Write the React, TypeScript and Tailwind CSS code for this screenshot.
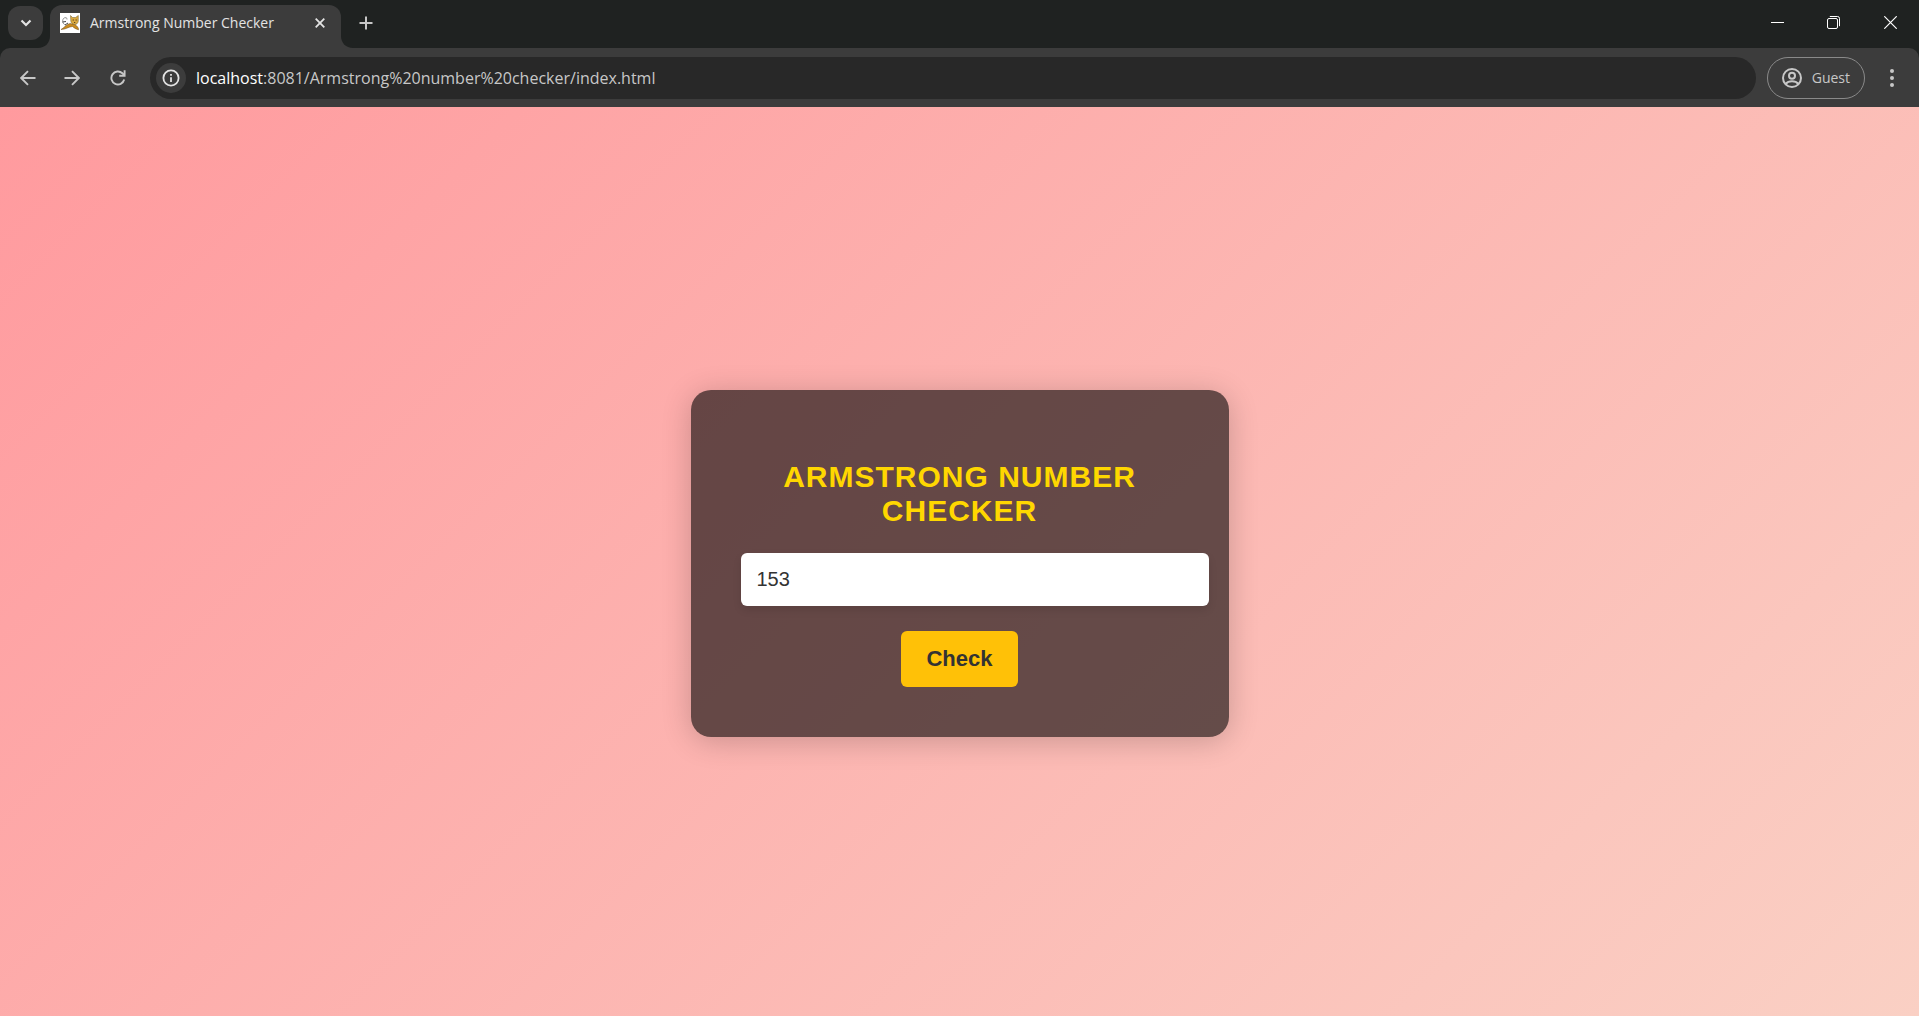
import { useState } from "react";
import type { ReactNode } from "react";

function IconButton({ label, className, children }: { label: string; className: string; children: ReactNode }) {
  return (
    <button type="button" aria-label={label} className={`flex shrink-0 items-center justify-center ${className}`}>
      {children}
    </button>
  );
}

function CatFavicon() {
  return (
    <svg viewBox="0 0 20 20" className="h-5 w-5 shrink-0" aria-hidden="true">
      <rect width="20" height="20" fill="#ffffff" />
      <path d="M5.500 12C2.500 11 2 7.500 3.500 5.500C5 4 7.500 4.500 7 6.500" fill="none" stroke="#777" strokeWidth=".8" />
      <path d="M2.500 9L6 8.500M5 12L8 10" stroke="#444" strokeWidth="1" />
      <path d="M1 16.500C4 15 6 11.500 10 10.500L15 11.500C17 13 19 15 18.500 16.800C16 16 14 15 12.500 13.500C9 13.500 6 16.500 1 16.500Z" fill="#c98a1e" stroke="#6b4a16" strokeWidth=".5" />
      <path d="M10.500 2.500L12.500 4.500H15.500L18.300 2.500L18.300 8C18 10.500 16.500 11.500 14.800 11.500C12.500 11.500 11 10 10.800 8Z" fill="#dba93f" stroke="#6b5a2a" strokeWidth=".5" />
      <path d="M12.700 7h1.100M15.600 7h1.100M14.200 9.500h1" stroke="#3c3020" strokeWidth="1" />
    </svg>
  );
}

function TabStrip() {
  return (
    <div className="flex h-12 items-stretch bg-[#1f2221]">
      <IconButton label="Search tabs" className="mt-1.5 ml-2 h-[34px] w-[35px] rounded-xl bg-[#3c3c3c]">
        <svg viewBox="0 0 12 8" className="h-2 w-3" fill="none" stroke="#e3e3e3" strokeWidth="2.2">
          <path d="M1.500 1.500L6 6L10.500 1.500" />
        </svg>
      </IconButton>
      <div className="relative ml-[7px] mt-[5px] flex w-[291px] items-start rounded-t-xl bg-[#3c3c3c] pt-2 pr-[11px] pl-2.5">
        <svg viewBox="0 0 12 12" className="absolute bottom-0 -left-3 h-3 w-3" aria-hidden="true">
          <path d="M12 0V12H0C7 12 12 7 12 0Z" fill="#3c3c3c" />
        </svg>
        <svg viewBox="0 0 12 12" className="absolute -right-3 bottom-0 h-3 w-3" aria-hidden="true">
          <path d="M0 0V12H12C5 12 0 7 0 0Z" fill="#3c3c3c" />
        </svg>
        <CatFavicon />
        <span className="ml-2.5 flex-1 text-sm whitespace-nowrap text-[#e3e3e3]">Armstrong Number Checker</span>
        <IconButton label="Close tab" className="h-5 w-5">
          <svg viewBox="0 0 10 10" className="h-2.5 w-2.5" stroke="#e3e3e3" strokeWidth="1.8">
            <path d="M.7 .7L9.300 9.300M9.300 .7L.7 9.300" />
          </svg>
        </IconButton>
      </div>
      <IconButton label="New tab" className="mt-1.5 ml-2 h-[34px] w-[34px]">
        <svg viewBox="0 0 14 14" className="h-3.5 w-3.5" stroke="#c7c7c7" strokeWidth="2">
          <path d="M7 .5V13.500M.5 7H13.500" />
        </svg>
      </IconButton>
      <div className="ml-auto flex h-[45px]">
        <IconButton label="Minimize" className="w-14">
          <svg viewBox="0 0 13 13" className="h-[13px] w-[13px]" fill="#ffffff">
            <rect y="6" width="13" height="1" />
          </svg>
        </IconButton>
        <IconButton label="Restore" className="w-14">
          <svg viewBox="0 0 13 13" className="h-[13px] w-[13px]" fill="none" stroke="#ffffff">
            <rect x=".5" y="2.500" width="10" height="10" rx="1.500" />
            <path d="M2.800 .5H10.500A2 2 0 0 1 12.500 2.500V10.200" />
          </svg>
        </IconButton>
        <IconButton label="Close" className="w-[58px]">
          <svg viewBox="0 0 13 13" className="h-[13px] w-[13px]" stroke="#ffffff" strokeWidth="1.200">
            <path d="M.3 .3L12.700 12.700M12.700 .3L.3 12.700" />
          </svg>
        </IconButton>
      </div>
    </div>
  );
}

function Toolbar() {
  return (
    <div className="bg-[#1f2221]">
      <div className="flex h-[59px] items-center rounded-t-[10px] bg-[#3c3c3c] pr-2.5 pl-1.5">
        <IconButton label="Back" className="h-11 w-11">
          <svg viewBox="0 0 16 16" className="h-4 w-4" fill="none" stroke="#c7c7c7" strokeWidth="1.900">
            <path d="M15.500 8H1.500M8 1.200L1.200 8L8 14.800" />
          </svg>
        </IconButton>
        <IconButton label="Forward" className="h-11 w-11">
          <svg viewBox="0 0 16 16" className="h-4 w-4" fill="none" stroke="#c7c7c7" strokeWidth="1.900">
            <path d="M.5 8H14.500M8 1.200L14.800 8L8 14.800" />
          </svg>
        </IconButton>
        <IconButton label="Reload" className="ml-0.5 h-11 w-11">
          <svg viewBox="0 0 16 16" className="h-4 w-4" fill="none" stroke="#c7c7c7" strokeWidth="1.900">
            <path d="M14.200 9.600A6.500 6.500 0 1 1 12.400 3.300L14.400 5.200" />
            <path d="M14.600 .3V5.700H9.200" />
          </svg>
        </IconButton>
        <div className="ml-2.5 flex h-[42px] flex-1 items-center rounded-full bg-[#282828] px-1.5">
          <IconButton label="View site information" className="h-[30px] w-[30px] rounded-full bg-[#3c3c3c]">
            <svg viewBox="0 0 18 18" className="h-[18px] w-[18px]" fill="none" stroke="#e3e3e3" strokeWidth="1.800">
              <circle cx="9" cy="9" r="7.600" />
              <path d="M9 8.200V13M9 5V6.800" />
            </svg>
          </IconButton>
          <a href="#page" className="ml-2.5 text-base whitespace-nowrap text-[#c7c7c7]">
            <span className="text-white">localhost</span>:8081/Armstrong%20number%20checker/index.html
          </a>
        </div>
        <button type="button" className="ml-[11px] flex h-[42px] items-center gap-2.5 rounded-full border border-[#8a8a8a] px-3.5 text-sm text-[#c7c7c7]">
          <svg viewBox="0 0 20 20" className="h-5 w-5" fill="none" stroke="#c7c7c7" strokeWidth="2">
            <circle cx="10" cy="10" r="9" />
            <circle cx="10" cy="7.800" r="3" />
            <path d="M3.500 16C5.200 14 7.500 13.200 10 13.200S14.800 14 16.500 16" />
          </svg>
          Guest
        </button>
        <IconButton label="Menu" className="ml-2.5 h-9 w-[34px]">
          <svg viewBox="0 0 4 18" className="h-[18px] w-1" fill="#c7c7c7">
            <circle cx="2" cy="2" r="2" />
            <circle cx="2" cy="9" r="2" />
            <circle cx="2" cy="16" r="2" />
          </svg>
        </IconButton>
      </div>
    </div>
  );
}

function CheckerCard() {
  const [value, setValue] = useState("153");
  return (
    <form
      onSubmit={(e) => e.preventDefault()}
      className="flex w-[538px] flex-col rounded-[20px] bg-black/60 p-[50px] font-['Liberation_Sans',Arial,sans-serif] shadow-[0_4px_30px_rgba(0,0,0,0.2)]"
    >
      <h1 className="mt-5 mb-[25px] text-center text-[30px] leading-[34px] font-bold tracking-[1px] text-[#ffd700] uppercase">
        Armstrong Number Checker
      </h1>
      <input
        type="text"
        inputMode="numeric"
        aria-label="Number to check"
        value={value}
        onChange={(e) => setValue(e.target.value)}
        className="-mr-[30px] h-[53px] rounded-md bg-white px-4 text-xl text-[#333333] shadow-[0_4px_8px_rgba(0,0,0,0.1)] outline-none"
      />
      <button type="submit" className="mt-[25px] h-14 self-center rounded-md bg-[#ffc107] px-[25px] text-[22px] font-bold text-[#333333]">
        Check
      </button>
    </form>
  );
}

export default function App() {
  return (
    <div className="flex min-h-screen flex-col font-['Open_Sans','Noto_Sans',sans-serif]">
      <header>
        <TabStrip />
        <Toolbar />
      </header>
      <main id="page" className="flex flex-1 items-center justify-center bg-[linear-gradient(135deg,#ff9a9e,#fad0c4)] pt-[3px]">
        <CheckerCard />
      </main>
    </div>
  );
}
